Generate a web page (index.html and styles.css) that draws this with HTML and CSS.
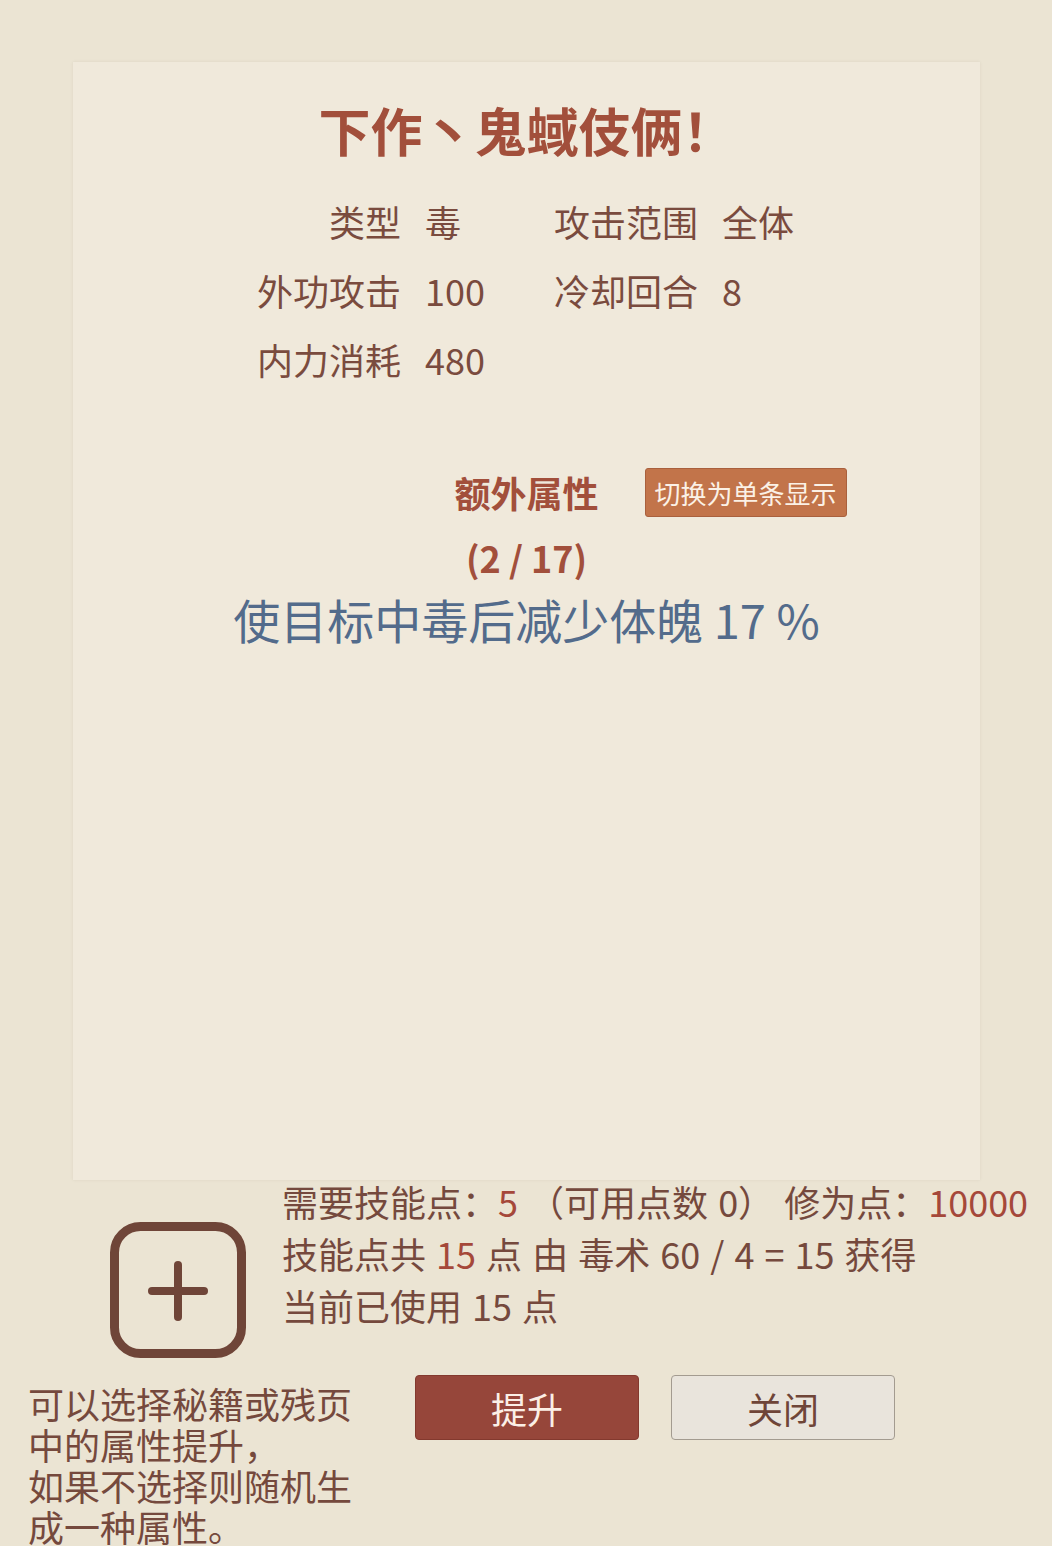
FILE: index.html
```html
<!DOCTYPE html>
<html lang="zh-CN">
<head>
    <meta charset="utf-8">
    <title>技能提升</title>
    <link rel="stylesheet" href="styles.css">
</head>
<body>
    <div class="panel">
        <h1 class="skill-name">下作丶鬼蜮伎俩！</h1>

        <div class="stats">
            <span class="stat-label">类型</span>
            <span class="stat-value">毒</span>
            <span class="stat-label">攻击范围</span>
            <span class="stat-value">全体</span>

            <span class="stat-label">外功攻击</span>
            <span class="stat-value">100</span>
            <span class="stat-label">冷却回合</span>
            <span class="stat-value">8</span>

            <span class="stat-label">内力消耗</span>
            <span class="stat-value">480</span>
        </div>

        <div class="extra-header">
            <span></span>
            <h4 class="extra-title">额外属性</h4>
            <div>
                <button class="switch-button" type="button">切换为单条显示</button>
            </div>
        </div>
        <p class="extra-count">(2 / 17)</p>
        <p class="extra-desc">使目标中毒后减少体魄 17 %</p>
    </div>

    <div class="info-row">
        <div class="add-slot">
            <svg width="136" height="136" viewBox="0 0 136 136">
                <rect x="4.5" y="4.5" width="127" height="127" rx="26" fill="none" stroke="#6f4538" stroke-width="9"/>
                <line x1="42" y1="69" x2="94" y2="69" stroke="#6f4538" stroke-width="8" stroke-linecap="round"/>
                <line x1="68" y1="43" x2="68" y2="95" stroke="#6f4538" stroke-width="8" stroke-linecap="round"/>
            </svg>
        </div>
        <div class="info-lines">
            <div>需要技能点：<span class="num">5</span> （可用点数 0） 修为点：<span class="num">10000</span></div>
            <div>技能点共 <span class="num">15</span> 点 由 毒术 60 / 4 = 15 获得</div>
            <div>当前已使用 15 点</div>
        </div>
    </div>

    <div class="action-row">
        <p class="hint">可以选择秘籍或残页中的属性提升，<br>如果不选择则随机生成一种属性。</p>
        <button class="upgrade-button" type="button">提升</button>
        <button class="close-button" type="button">关闭</button>
    </div>
</body>
</html>
```

FILE: styles.css
```css
body {
    font-family: "Noto Sans CJK SC", "Noto Sans", sans-serif;
    background-color: #ebe4d3;
    color: #7a4b3e;
    margin: 0;
    width: 1052px;
    height: 1546px;
    overflow: hidden;
}

.panel {
    margin: 62px 0 0 73px;
    width: 907px;
    height: 1118px;
    padding-top: 32px;
    box-sizing: border-box;
    background-color: #f0e9db;
    box-shadow: 0 0 3px rgba(120, 100, 70, 0.1);
}

.skill-name {
    margin: 0;
    font-size: 52px;
    line-height: 72px;
    font-weight: bold;
    text-align: center;
    color: #a24f3b;
}

.stats {
    display: grid;
    grid-template-columns: 144px 105px 144px auto;
    column-gap: 24px;
    margin: 21px 0 0 184px;
    font-size: 36px;
    line-height: 69px;
}

.stat-label {
    text-align: right;
}

.extra-header {
    display: grid;
    grid-template-columns: 1fr auto 1fr;
    align-items: center;
    margin-top: 72px;
    height: 49px;
}

.extra-title {
    margin: 0;
    font-size: 36px;
    font-weight: bold;
    color: #a24f3b;
}

.switch-button {
    margin-left: 46px;
    height: 49px;
    padding: 0 9px;
    font-family: inherit;
    font-size: 26px;
    color: #fbf1e6;
    background-color: #c2744a;
    border: 1px solid #a9603d;
    border-radius: 3px;
}

.extra-count {
    margin: 17px 0 0;
    font-size: 36px;
    line-height: 50px;
    font-weight: bold;
    text-align: center;
    color: #a24f3b;
}

.extra-desc {
    margin: 7px 0 0;
    font-size: 47px;
    line-height: 60px;
    text-align: center;
    color: #536b8b;
}

.info-row {
    display: flex;
    align-items: flex-start;
    padding-left: 110px;
    gap: 36px;
    height: 178px;
}

.add-slot {
    margin-top: 42px;
    width: 136px;
    height: 136px;
}

.add-slot svg {
    display: block;
}

.info-lines {
    margin-top: -5px;
    font-size: 36px;
    line-height: 52px;
    word-spacing: 2px;
    white-space: nowrap;
    color: #75493d;
}

.num {
    color: #a5483a;
}

.action-row {
    display: flex;
    align-items: flex-start;
    padding-left: 28px;
}

.hint {
    width: 330px;
    margin: 25px 0 0;
    font-size: 36px;
    line-height: 41px;
    color: #75493d;
}

.upgrade-button,
.close-button {
    width: 224px;
    height: 65px;
    margin-top: 17px;
    font-family: inherit;
    font-size: 36px;
    border-radius: 4px;
}

.upgrade-button {
    margin-left: 57px;
    color: #fbefe6;
    background-color: #96463a;
    border: 1px solid #83392e;
}

.close-button {
    margin-left: 32px;
    color: #6f4538;
    background-color: #e9e4dc;
    border: 1px solid #a39b90;
}
```
